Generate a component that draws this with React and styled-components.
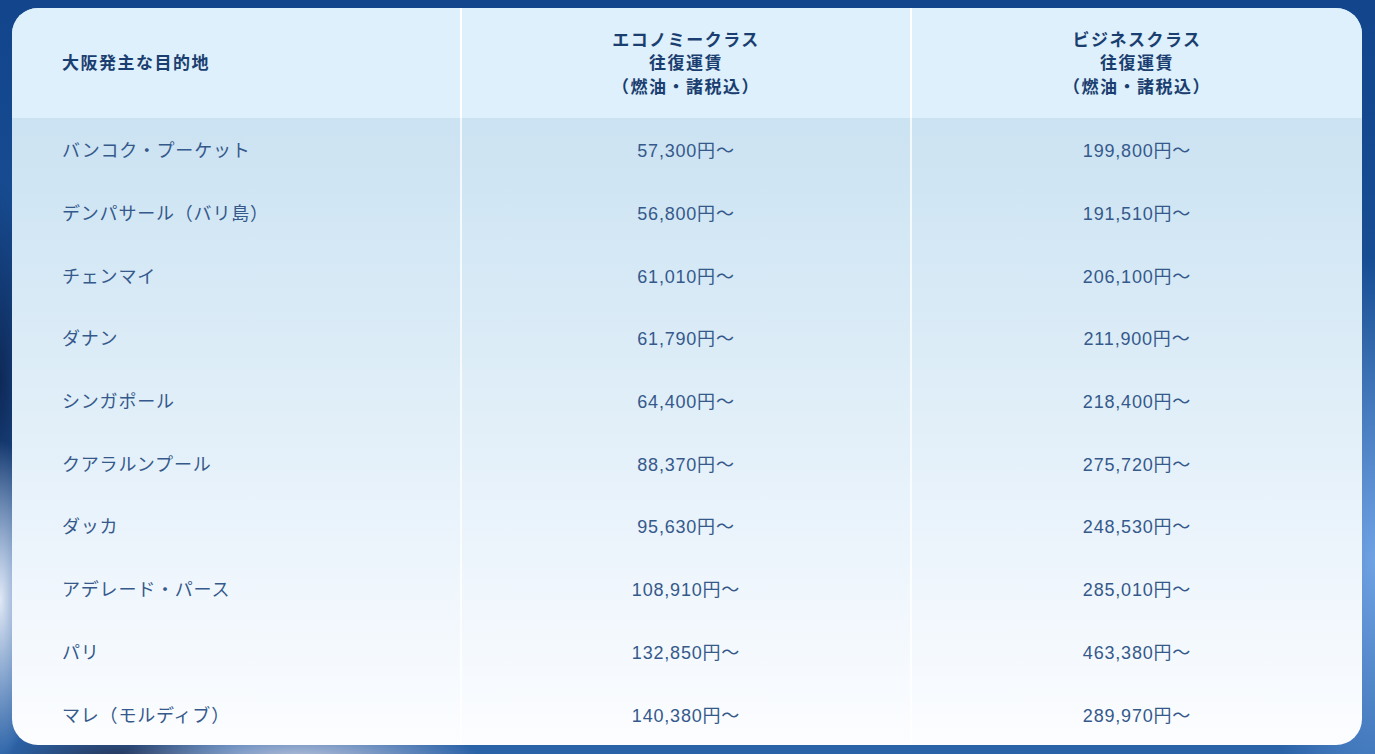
import React from 'react';
import styled, { createGlobalStyle } from 'styled-components';

const Global = createGlobalStyle`
  html, body {
    margin: 0;
    padding: 0;
  }
  body {
    font-family: 'Liberation Sans', 'Noto Sans CJK JP', sans-serif;
  }
`;

const Page = styled.div`
  width: 1375px;
  height: 754px;
  box-sizing: border-box;
  padding: 8px 13px 0 12px;
  overflow: hidden;
  background:
    radial-gradient(ellipse 40px 160px at 0px 600px, rgba(235, 240, 250, 0.95), transparent),
    radial-gradient(ellipse 40px 200px at 0px 380px, rgba(10, 30, 70, 0.8), transparent),
    radial-gradient(ellipse 180px 40px at 300px 760px, rgba(200, 205, 225, 0.9), transparent),
    radial-gradient(ellipse 120px 40px at 120px 760px, rgba(40, 50, 80, 0.9), transparent),
    radial-gradient(ellipse 120px 300px at 1375px 560px, rgba(120, 170, 235, 0.9), transparent),
    linear-gradient(180deg, #12458b 0%, #194f95 40%, #2b63a8 100%);
`;

const Card = styled.div`
  border-radius: 26px;
  overflow: hidden;
  background: linear-gradient(180deg, #c4def0 0%, #d8eaf6 40%, #edf5fc 75%, #fcfdff 100%);
`;

const Grid = styled.div`
  display: grid;
  grid-template-columns: 448px 450px 1fr;
`;

const HeadCell = styled.div`
  height: 110px;
  box-sizing: border-box;
  background: #ddf0fb;
  display: flex;
  align-items: center;
  justify-content: ${p => (p.$left ? 'flex-start' : 'center')};
  padding-left: ${p => (p.$left ? '50px' : '0')};
  text-align: ${p => (p.$left ? 'left' : 'center')};
  border-left: ${p => (p.$left ? 'none' : '2px solid #ffffff')};
  font-family: 'Noto Sans CJK JP', sans-serif;
  color: #1b3e70;
  font-weight: 700;
  font-size: 17px;
  letter-spacing: 1.5px;
  line-height: 23.5px;
  padding-bottom: 2px;
`;

const Cell = styled.div`
  height: 62.7px;
  box-sizing: border-box;
  display: flex;
  align-items: center;
  justify-content: ${p => (p.$left ? 'flex-start' : 'center')};
  padding-left: ${p => (p.$left ? '50px' : '0')};
  border-left: ${p => (p.$left ? 'none' : '2px solid rgba(255, 255, 255, 0.75)')};
  color: #35598b;
  font-size: 18px;
  letter-spacing: 0.8px;
`;

const rows = [
  ['バンコク・プーケット', '57,300円〜', '199,800円〜'],
  ['デンパサール（バリ島）', '56,800円〜', '191,510円〜'],
  ['チェンマイ', '61,010円〜', '206,100円〜'],
  ['ダナン', '61,790円〜', '211,900円〜'],
  ['シンガポール', '64,400円〜', '218,400円〜'],
  ['クアラルンプール', '88,370円〜', '275,720円〜'],
  ['ダッカ', '95,630円〜', '248,530円〜'],
  ['アデレード・パース', '108,910円〜', '285,010円〜'],
  ['パリ', '132,850円〜', '463,380円〜'],
  ['マレ（モルディブ）', '140,380円〜', '289,970円〜'],
];

export default function App() {
  return (
    <Page>
      <Global />
      <Card>
        <Grid>
          <HeadCell $left>大阪発主な目的地</HeadCell>
          <HeadCell>
            エコノミークラス<br />往復運賃<br />（燃油・諸税込）
          </HeadCell>
          <HeadCell>
            ビジネスクラス<br />往復運賃<br />（燃油・諸税込）
          </HeadCell>
          {rows.map((r, i) => (
            <React.Fragment key={i}>
              <Cell $left>{r[0]}</Cell>
              <Cell>{r[1]}</Cell>
              <Cell>{r[2]}</Cell>
            </React.Fragment>
          ))}
        </Grid>
      </Card>
    </Page>
  );
}
